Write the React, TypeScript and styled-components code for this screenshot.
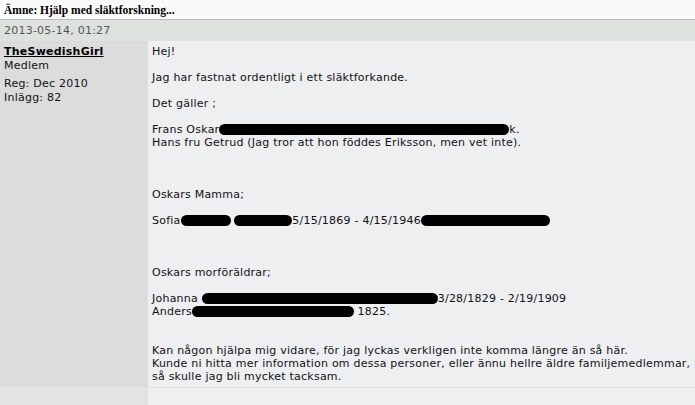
import React from 'react';
import styled, { createGlobalStyle } from 'styled-components';

const GlobalStyle = createGlobalStyle`
  html, body {
    margin: 0;
    padding: 0;
    background: #eeeff1;
  }
  body {
    font-family: 'DejaVu Sans', Verdana, sans-serif;
    font-size: 11px;
    letter-spacing: 0.23px;
    color: #111;
  }
`;

const Page = styled.div`
  width: 695px;
  height: 405px;
  overflow: hidden;
  display: flex;
  flex-direction: column;
`;

const TopicBar = styled.div`
  height: 19px;
  padding: 0 4px;
  display: flex;
  align-items: center;
  background: #fafafa;
  border-bottom: 1px solid #b8bcb8;
  font-family: 'Liberation Serif', 'DejaVu Serif', serif;
  font-weight: bold;
  font-size: 11.5px;
  letter-spacing: 0;
  color: #000;
`;

const DateBar = styled.div`
  height: 21px;
  padding: 0 4px;
  display: flex;
  align-items: center;
  background: #dee2de;
  color: #555;
`;

const PostRow = styled.div`
  display: flex;
`;

const UserCol = styled.div`
  width: 140px;
  flex-shrink: 0;
  padding: 4px;
  background: #dcdcdc;
  line-height: 14px;
`;

const UserName = styled.a`
  display: block;
  font-weight: bold;
  color: #000;
  text-decoration: underline;
`;

const UserInfo = styled.div<{ $gap?: number }>`
  margin-top: ${(p) => p.$gap || 0}px;
`;

const MessageCol = styled.div`
  flex: 1;
  padding: 4px;
  background: #eeeff1;
  line-height: 13px;
  white-space: nowrap;
`;

const Redacted = styled.span<{ $w: number }>`
  display: inline-block;
  width: ${(p) => p.$w}px;
  height: 11px;
  background: #000;
  border-radius: 6px;
  vertical-align: -2px;
`;

const FooterRow = styled.div`
  display: flex;
  flex: 1;
`;

const FooterLeft = styled.div`
  width: 148px;
  flex-shrink: 0;
  background: #e3e3e3;
`;

const FooterRight = styled.div`
  flex: 1;
  background: #eeeff1;
  border-top: 1px solid #dddedf;
`;

export default function App() {
  return (
    <Page>
      <GlobalStyle />
      <TopicBar>Ämne: Hjälp med släktforskning...</TopicBar>
      <DateBar>2013-05-14, 01:27</DateBar>
      <PostRow>
        <UserCol>
          <UserName>TheSwedishGirl</UserName>
          <UserInfo>Medlem</UserInfo>
          <UserInfo $gap={4}>Reg: Dec 2010</UserInfo>
          <UserInfo>Inlägg: 82</UserInfo>
        </UserCol>
        <MessageCol>
          Hej!
          <br />
          <br />
          Jag har fastnat ordentligt i ett släktforkande.
          <br />
          <br />
          Det gäller ;
          <br />
          <br />
          Frans Oskar<Redacted $w={290} />k.
          <br />
          Hans fru Getrud (Jag tror att hon föddes Eriksson, men vet inte).
          <br />
          <br />
          <br />
          <br />
          Oskars Mamma;
          <br />
          <br />
          Sofia<Redacted $w={50} /> <Redacted $w={58} />5/15/1869 - 4/15/1946<Redacted $w={129} />
          <br />
          <br />
          <br />
          <br />
          Oskars morföräldrar;
          <br />
          <br />
          Johanna <Redacted $w={236} />3/28/1829 - 2/19/1909
          <br />
          Anders<Redacted $w={162} /> 1825.
          <br />
          <br />
          <br />
          Kan någon hjälpa mig vidare, för jag lyckas verkligen inte komma längre än så här.
          <br />
          Kunde ni hitta mer information om dessa personer, eller ännu hellre äldre familjemedlemmar,
          <br />
          så skulle jag bli mycket tacksam.
        </MessageCol>
      </PostRow>
      <FooterRow>
        <FooterLeft />
        <FooterRight />
      </FooterRow>
    </Page>
  );
}
